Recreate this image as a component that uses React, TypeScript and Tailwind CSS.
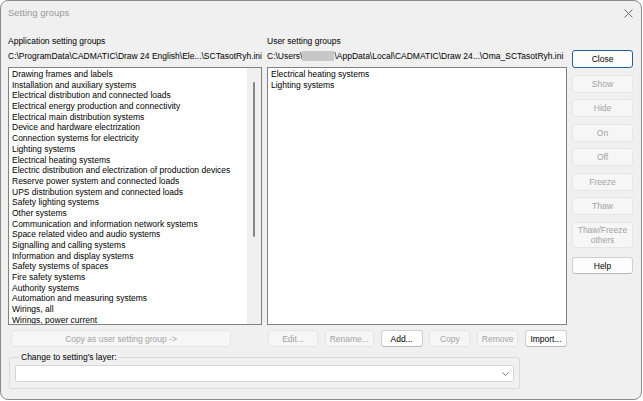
import React from 'react';

const appGroups = [
  'Drawing frames and labels',
  'Installation and auxiliary systems',
  'Electrical distribution and connected loads',
  'Electrical energy production and connectivity',
  'Electrical main distribution systems',
  'Device and hardware electrization',
  'Connection systems for electricity',
  'Lighting systems',
  'Electrical heating systems',
  'Electric distribution and electrization of production devices',
  'Reserve power system and connected loads',
  'UPS distribution system and connected loads',
  'Safety lighting systems',
  'Other systems',
  'Communication and information network systems',
  'Space related video and audio systems',
  'Signalling and calling systems',
  'Information and display systems',
  'Safety systems of spaces',
  'Fire safety systems',
  'Authority systems',
  'Automation and measuring systems',
  'Wirings, all',
  'Wirings, power current',
];

const userGroups = ['Electrical heating systems', 'Lighting systems'];

const sideButtons = [
  { label: 'Show', enabled: false },
  { label: 'Hide', enabled: false },
  { label: 'On', enabled: false },
  { label: 'Off', enabled: false },
  { label: 'Freeze', enabled: false },
  { label: 'Thaw', enabled: false },
];

function Btn({
  children,
  enabled,
  className = '',
}: {
  children: React.ReactNode;
  enabled: boolean;
  className?: string;
}) {
  return (
    <button
      className={`flex items-center justify-center rounded-[3px] border text-[8.5px] leading-[10px] ${
        enabled
          ? 'border-[#d0d0d0] border-b-[#b8b8b8] bg-[#fdfdfd] text-black'
          : 'border-[#e6e6e6] bg-[#f6f6f6] text-[#a3a3a3]'
      } ${className}`}
    >
      {children}
    </button>
  );
}

export default function App() {
  return (
    <div
      className="h-[401px] w-[643px] bg-white"
      style={{ fontFamily: '"Segoe UI", "Liberation Sans", Arial, sans-serif' }}
    >
      <div className="flex h-[400px] w-[642px] flex-col overflow-hidden rounded-[8px] border border-[#8a8a8a] bg-[#f0f0f0]">
        {/* Title bar */}
        <div className="flex h-[24px] shrink-0 items-center justify-between pl-[7px] pr-[7px]">
          <span className="text-[9.5px] text-[#999999]">Setting groups</span>
          <svg width="9" height="9" viewBox="0 0 9 9" className="mr-[1px]">
            <path d="M0.5 0.5 L8.5 8.5 M8.5 0.5 L0.5 8.5" stroke="#6b6b6b" strokeWidth="1" />
          </svg>
        </div>

        <div className="flex pl-[7px] pt-[9px]">
          {/* Application groups */}
          <div className="flex w-[254px] flex-col">
            <div className="h-[12px] pt-[1px] text-[8.5px] leading-[12px] text-black">Application setting groups</div>
            <div className="mt-[4px] h-[12px] whitespace-nowrap text-[8.5px] leading-[12px] text-black">
              C:\ProgramData\CADMATIC\Draw 24 English\Ele...\SCTasotRyh.ini
            </div>
            <div className="mt-[5px] flex h-[258px] border border-[#828282] bg-white">
              <div className="flex-1 overflow-hidden pl-[3px] pt-[1px]">
                {appGroups.map((g) => (
                  <div key={g} className="h-[10.7px] whitespace-nowrap text-[8.5px] leading-[10.7px] text-black">
                    {g}
                  </div>
                ))}
              </div>
              <div className="flex w-[14px] justify-center bg-[#f0f0f0] pt-[14px]">
                <div className="h-[155px] w-[2px] rounded-full bg-[#868686]" />
              </div>
            </div>
            <Btn enabled={false} className="ml-[3px] mt-[5px] h-[17px] w-[220px]">
              Copy as user setting group -&gt;
            </Btn>
          </div>

          {/* User groups */}
          <div className="ml-[5px] flex w-[300px] flex-col">
            <div className="h-[12px] pt-[1px] text-[8.5px] leading-[12px] text-black">User setting groups</div>
            <div className="mt-[4px] flex h-[12px] items-center whitespace-nowrap text-[8.5px] leading-[12px] text-black">
              <span>C:\Users\</span>
              <span className="h-[10px] w-[32px] bg-[#c8c8c8]" />
              <span>\AppData\Local\CADMATIC\Draw 24...\Oma_SCTasotRyh.ini</span>
            </div>
            <div className="mt-[5px] h-[258px] border border-[#828282] bg-white pl-[3px] pt-[1px]">
              {userGroups.map((g) => (
                <div key={g} className="h-[10.7px] whitespace-nowrap text-[8.5px] leading-[10.7px] text-black">
                  {g}
                </div>
              ))}
            </div>
            <div className="mt-[5px] flex h-[17px] justify-between">
              <Btn enabled={false} className="ml-[1px] w-[50px]">Edit...</Btn>
              <Btn enabled={false} className="w-[49px]">Rename...</Btn>
              <Btn enabled className="w-[42px]">Add...</Btn>
              <Btn enabled={false} className="w-[41px]">Copy</Btn>
              <Btn enabled={false} className="w-[41px]">Remove</Btn>
              <Btn enabled className="w-[42px]">Import...</Btn>
            </div>
          </div>

          {/* Side buttons */}
          <div className="ml-[5px] mt-[16px] flex w-[61px] flex-col gap-[6.5px]">
            <button className="flex h-[18px] items-center justify-center rounded-[3px] border border-[#22609c] bg-[#fdfdfd] text-[8.5px] text-black">
              Close
            </button>
            {sideButtons.map((b) => (
              <Btn key={b.label} enabled={b.enabled} className="h-[18px]">
                {b.label}
              </Btn>
            ))}
            <Btn enabled={false} className="h-[26px] flex-col">
              <span>Thaw/Freeze</span>
              <span>others</span>
            </Btn>
            <Btn enabled className="mt-[3px] h-[17px]">
              Help
            </Btn>
          </div>
        </div>

        {/* Layer group box */}
        <fieldset className="ml-[8px] mt-[5px] w-[511px] rounded-[2px] border border-[#dadada] px-[5px] pb-[6px] pt-[2px]">
          <legend className="ml-[4px] px-[2px] text-[8.5px] leading-[11px] text-black">Change to setting's layer:</legend>
          <div className="flex h-[17px] items-center justify-end rounded-[2px] border border-[#d6d6d6] bg-white pr-[4px]">
            <svg width="7" height="4" viewBox="0 0 7 4">
              <path d="M0.5 0.5 L3.5 3.5 L6.5 0.5" fill="none" stroke="#606060" strokeWidth="0.8" />
            </svg>
          </div>
        </fieldset>
      </div>
    </div>
  );
}
